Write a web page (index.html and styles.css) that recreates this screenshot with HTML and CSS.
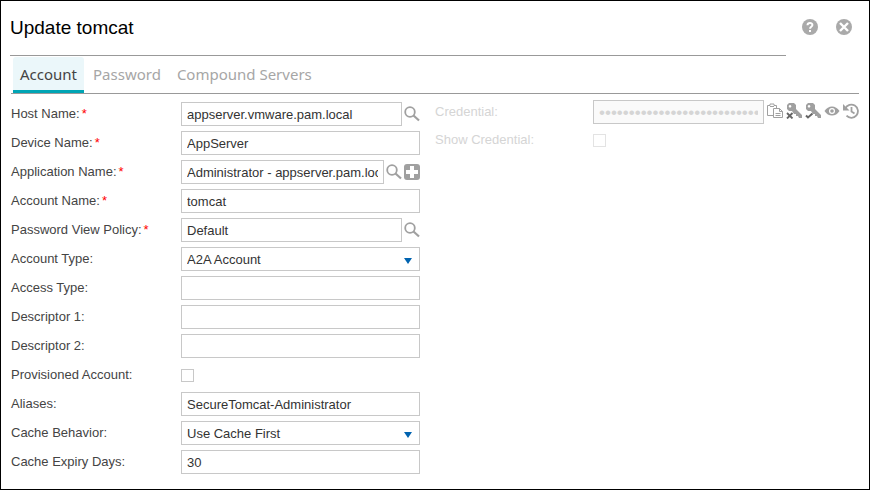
FILE: index.html
```html
<!DOCTYPE html>
<html lang="en">
<head>
<meta charset="utf-8">
<title>Update tomcat</title>
<link rel="stylesheet" href="styles.css">
</head>
<body>
<svg class="defs" aria-hidden="true">
  <symbol id="search" viewBox="0 0 16 16"><circle cx="6" cy="6" r="4.800" fill="none" stroke="currentColor" stroke-width="1.800"/><path d="M9.500 9.500 15 14.500" stroke="currentColor" stroke-width="2.200"/></symbol>
  <symbol id="plus" viewBox="0 0 16 16"><rect width="16" height="16" rx="3" fill="currentColor"/><path d="M6 2h4v4h4v4h-4v4H6v-4H2V6h4z" fill="#fff"/></symbol>
  <symbol id="key" viewBox="0 0 16 16"><path fill="currentColor" fill-rule="evenodd" d="M3 0h5l2 2v4l6 6v3h-3l-1-2h-2v-2H8L6 8H3L1 6V2zM4 2a1.300 1.300 0 1 0 .1 0z"/></symbol>
</svg>
<main class="dialog">
  <header class="header">
    <h1 class="title">Update tomcat</h1>
    <div class="actions">
      <button class="icon-button" type="button" aria-label="Help"><svg class="icon" viewBox="0 0 16 16"><circle cx="8" cy="8" r="8" fill="currentColor"/><path d="M5.500 6.200C5.600 3.200 10.500 3.300 10.400 6 10.300 7.800 8.100 7.900 8.100 9.700" fill="none" stroke="#fff" stroke-width="2"/><path d="M7 11h2v2H7z" fill="#fff"/></svg></button>
      <button class="icon-button" type="button" aria-label="Close"><svg class="icon" viewBox="0 0 16 16"><circle cx="8" cy="8" r="8" fill="currentColor"/><path d="m4 4 8 8m0-8-8 8" stroke="#fff" stroke-width="2.400"/></svg></button>
    </div>
  </header>
  <nav class="tabs">
    <a class="tab tab-active" href="#account" aria-current="page">Account</a>
    <a class="tab" href="#password">Password</a>
    <a class="tab" href="#compound">Compound Servers</a>
  </nav>
  <form class="form" id="account">
    <div class="fields">
      <div class="row">
        <label class="label" for="host">Host Name:<span class="required">*</span></label>
        <div class="control"><input class="input" id="host" type="text" value="appserver.vmware.pam.local"><button class="icon-button" type="button" aria-label="Find host"><svg class="icon"><use href="#search"/></svg></button></div>
      </div>
      <div class="row">
        <label class="label" for="device">Device Name:<span class="required">*</span></label>
        <div class="control"><input class="input" id="device" type="text" value="AppServer"></div>
      </div>
      <div class="row">
        <label class="label" for="application">Application Name:<span class="required">*</span></label>
        <div class="control"><input class="input" id="application" type="text" value="Administrator - appserver.pam.local"><button class="icon-button" type="button" aria-label="Find application"><svg class="icon"><use href="#search"/></svg></button><button class="icon-button" type="button" aria-label="Add application"><svg class="icon"><use href="#plus"/></svg></button></div>
      </div>
      <div class="row">
        <label class="label" for="name">Account Name:<span class="required">*</span></label>
        <div class="control"><input class="input" id="name" type="text" value="tomcat"></div>
      </div>
      <div class="row">
        <label class="label" for="policy">Password View Policy:<span class="required">*</span></label>
        <div class="control"><input class="input" id="policy" type="text" value="Default"><button class="icon-button" type="button" aria-label="Find policy"><svg class="icon"><use href="#search"/></svg></button></div>
      </div>
      <div class="row">
        <label class="label" for="account-type">Account Type:</label>
        <div class="control select"><select class="input" id="account-type"><option>A2A Account</option></select></div>
      </div>
      <div class="row">
        <label class="label" for="access-type">Access Type:</label>
        <div class="control"><input class="input" id="access-type" type="text"></div>
      </div>
      <div class="row">
        <label class="label" for="descriptor1">Descriptor 1:</label>
        <div class="control"><input class="input" id="descriptor1" type="text"></div>
      </div>
      <div class="row">
        <label class="label" for="descriptor2">Descriptor 2:</label>
        <div class="control"><input class="input" id="descriptor2" type="text"></div>
      </div>
      <div class="row">
        <label class="label" for="provisioned">Provisioned Account:</label>
        <div class="control"><input class="checkbox" id="provisioned" type="checkbox"></div>
      </div>
      <div class="row">
        <label class="label" for="aliases">Aliases:</label>
        <div class="control"><input class="input" id="aliases" type="text" value="SecureTomcat-Administrator"></div>
      </div>
      <div class="row">
        <label class="label" for="cache">Cache Behavior:</label>
        <div class="control select"><select class="input" id="cache"><option>Use Cache First</option></select></div>
      </div>
      <div class="row">
        <label class="label" for="expiry">Cache Expiry Days:</label>
        <div class="control"><input class="input" id="expiry" type="text" value="30"></div>
      </div>
    </div>
    <div class="fields credentials">
      <div class="row">
        <label class="label" for="credential">Credential:</label>
        <div class="control">
          <input class="input secret" id="credential" type="password" value="000000000000000000000000000000" disabled>
          <div class="tools">
            <button class="icon-button" type="button" aria-label="Copy credential"><svg class="icon" viewBox="0 0 16 16"><path fill="none" stroke="currentColor" d="M6 12.500H.5V2.500H3V1h4v1.500h2.500V5M3 3.500h4M6.500 5.500h6l3 3v6h-9zM12.500 5.500v3h3M8.500 10.500h5M8.500 12.500h5"/></svg></button>
            <button class="icon-button" type="button" aria-label="Invalidate credential"><svg class="icon" viewBox="0 0 16 16"><use href="#key"/><path d="m1 10 5.500 5.500m0-5.500L1 15.500" stroke="#fff" stroke-width="4"/><path d="m1 10 5.500 5.500m0-5.500L1 15.500" stroke="#666" stroke-width="1.800"/></svg></button>
            <button class="icon-button" type="button" aria-label="Verify credential"><svg class="icon" viewBox="0 0 16 16"><use href="#key"/><path d="m1 12.500 2 2 4.500-4" fill="none" stroke="#fff" stroke-width="4"/><path d="m1 12.500 2 2 4.500-4" fill="none" stroke="#666" stroke-width="2"/></svg></button>
            <button class="icon-button" type="button" aria-label="View credential"><svg class="icon" viewBox="0 0 16 16"><path fill="currentColor" d="M.5 8Q3.500 3.500 8 3.500T15.500 8Q12.500 12.500 8 12.500T.5 8z"/><circle cx="8" cy="8" r="3" fill="#fff"/><circle cx="8" cy="8" r="1.800" fill="currentColor"/></svg></button>
            <button class="icon-button" type="button" aria-label="Credential history"><svg class="icon" viewBox="0 0 16 16"><path d="M2.300 5.500A6.600 6.600 0 1 1 3.500 12.700M8.500 4v4.500l3 2" fill="none" stroke="currentColor" stroke-width="1.800"/><path d="M0 1v6.500h6.500z" fill="currentColor"/></svg></button>
          </div>
        </div>
      </div>
      <div class="row">
        <label class="label" for="show">Show Credential:</label>
        <div class="control"><input class="checkbox" id="show" type="checkbox" disabled></div>
      </div>
    </div>
  </form>
</main>
</body>
</html>
```
FILE: styles.css
```css
* { box-sizing: border-box; }

body {
  margin: 0;
  background: #fff;
  color: #444;
  font: 13px/24px "Liberation Sans", Arial, sans-serif;
}

.defs { position: absolute; width: 0; height: 0; }

.dialog {
  min-height: 100vh;
  border: 1px solid #000;
  padding: 0 10px 12px;
}

.header {
  display: flex;
  align-items: center;
  gap: 16px;
  margin-left: -1px;
  padding-right: 7px;
}

.title {
  flex: 1;
  margin: 0;
  border-bottom: 1px solid #999;
  color: #000;
  font-size: 19px;
  font-weight: 400;
  line-height: 54px;
}

.actions { display: flex; gap: 18px; padding-bottom: 3px; color: #aaa; }

.icon-button {
  display: block;
  flex: none;
  width: 16px;
  height: 16px;
  border: 0;
  padding: 0;
  background: none;
  color: inherit;
}

.icon { display: block; width: 16px; height: 16px; }

.tabs {
  display: flex;
  gap: 2px;
  border-bottom: 1px solid #999;
  padding: 1px 2px 0;
}

.tab {
  height: 36px;
  border-bottom: 3px solid transparent;
  border-radius: 3px 3px 0 0;
  padding: 0 7px;
  color: #a6a6a6;
  font: 15px/35px "Noto Sans", "Open Sans", sans-serif;
  text-decoration: none;
}

.tab-active {
  border-color: #00a5b5;
  background: #ebf7fa;
  color: #444;
}

.form {
  display: grid;
  grid-template-columns: 409fr 424fr;
  gap: 15px;
  padding-top: 8px;
}

.fields { display: flex; flex-direction: column; gap: 5px; }

.row { display: grid; grid-template-columns: 170px 1fr; height: 24px; }

.label { line-height: 26px; }

.required { margin-left: 2px; color: #f00; }

.control {
  display: flex;
  align-items: center;
  gap: 2px;
  min-width: 0;
  color: #a0a0a0;
}

.input {
  flex: 1;
  min-width: 0;
  width: 100%;
  height: 24px;
  border: 1px solid #c8c8c8;
  border-radius: 0;
  padding: 0 5px;
  background: #fff;
  color: #333;
  font: inherit;
  appearance: none;
}

input.input { padding-top: 1px; }

.select { position: relative; }

.select::after {
  content: "";
  position: absolute;
  right: 8px;
  top: 12px;
  width: 8px;
  height: 6px;
  background: #0063b0;
  clip-path: polygon(0 0, 100% 0, 50% 100%);
  pointer-events: none;
}

.checkbox {
  width: 13px;
  height: 13px;
  margin: 0;
  border: 1px solid #c8c8c8;
  background: #fff;
  appearance: none;
}

.checkbox:disabled { border-color: #e3e3e3; }

.form { padding-top: 7px; }

.credentials { gap: 4px; margin-top: -2px; color: #d5d5d5; }
.credentials .row { grid-template-columns: 158px 1fr; }

.secret {
  background: #fafafa;
  color: #d5d5d5;
  font-size: 17px;
}

.tools { display: flex; gap: 3px; margin-left: 1px; padding-bottom: 2px; }
```
